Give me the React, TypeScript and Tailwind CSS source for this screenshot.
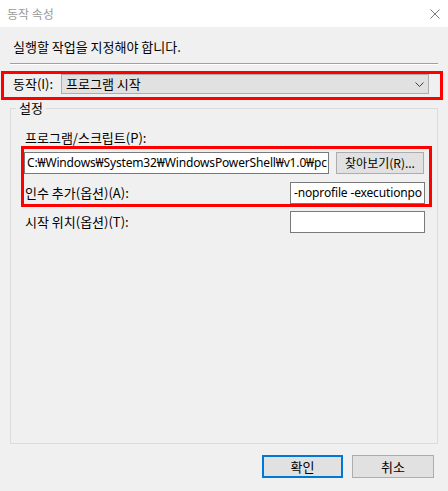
import React from "react";

const kr = "font-['Noto_Sans_CJK_KR',sans-serif]";
const latin = "font-['Noto_Sans','Noto_Sans_CJK_KR',sans-serif]";

const TextBox: React.FC<{ value?: string; className: string }> = ({ value = "", className }) => (
  <div
    className={`h-[22px] bg-white border border-[#7a7a7a] overflow-hidden whitespace-nowrap flex items-center pl-[2px] text-[12px] tracking-[-0.15px] text-black ${latin} ${className}`}
  >
    {value}
  </div>
);

export default function App() {
  return (
    <div className={`w-[448px] h-[491px] bg-[#f0f0f0] flex flex-col text-[13px] text-black ${kr}`}>
      {/* title bar */}
      <div className="h-[27px] bg-white flex items-center justify-between pl-[7px] pr-[8px] shrink-0">
        <span className="text-[12px] text-[#9a9a9a] leading-[16px]">동작 속성</span>
        <svg width="10" height="10" viewBox="0 0 10 10" className="text-[#7a7a7a]">
          <path d="M0.5 0.5 L9.5 9.5 M9.5 0.5 L0.5 9.5" stroke="currentColor" strokeWidth="1" fill="none" />
        </svg>
      </div>

      <p className="mt-[12px] ml-[13px] leading-[16px]">실행할 작업을 지정해야 합니다.</p>

      <div className="mt-[8px] mx-[10px] h-[2px] border-t border-t-[#a0a0a0] border-b border-b-white" />

      {/* action row */}
      <div className="mt-[6px] ml-[1px] w-[442px] h-[29px] border-[3px] border-[#ff0000] flex items-start pl-[9px]">
        <span className="w-[48px] shrink-0 leading-[20px] whitespace-nowrap">동작(I):</span>
        <div className="w-[368px] h-[20px] bg-[#e1e1e1] border border-[#adadad] flex items-center justify-between pl-[4px] pr-[4px]">
          <span className="leading-[16px]">프로그램 시작</span>
          <svg width="9" height="5" viewBox="0 0 9 5">
            <path d="M0.5 0.5 L4.5 4.5 L8.5 0.5" stroke="#3c3c3c" strokeWidth="1" fill="none" />
          </svg>
        </div>
      </div>

      {/* settings group */}
      <fieldset className="ml-[10px] w-[428px] h-[344px] border border-[#dcdcdc] p-0 m-0 min-w-0">
        <legend className="ml-[5px] px-[3px] leading-[16px]">설정</legend>

        <p className="mt-[14px] ml-[14px] leading-[16px]">프로그램/스크립트(P):</p>

        <div className="mt-0 ml-[10px] w-[411px] h-[61px] border-[3px] border-[#ff0000] flex flex-col pr-[4px]">
          <div className="mt-[3px] flex items-center">
            <TextBox value="C:₩Windows₩System32₩WindowsPowerShell₩v1.0₩pc" className="w-[305px]" />
            <button className="ml-[7px] w-[88px] h-[22px] bg-[#e1e1e1] border border-[#adadad] leading-[16px] text-[12px] whitespace-nowrap px-0">
              찾아보기(R)...
            </button>
          </div>
          <div className="mt-[8px] flex items-center justify-between">
            <span className="ml-[1px] leading-[16px]">인수 추가(옵션)(A):</span>
            <TextBox value="-noprofile -executionpo" className="w-[135px] pl-[3px]" />
          </div>
        </div>

        <div className="mt-[4px] ml-[14px] w-[400px] flex items-center justify-between">
          <span className="leading-[16px]">시작 위치(옵션)(T):</span>
          <TextBox className="w-[135px]" />
        </div>
      </fieldset>

      {/* dialog buttons */}
      <div className="mt-[11px] flex justify-end gap-[9px] pr-[14px]">
        <button className="w-[81px] h-[23px] bg-[#e1e1e1] border-2 border-[#0078d7] leading-[16px]">확인</button>
        <button className="w-[82px] h-[23px] bg-[#e1e1e1] border border-[#adadad] leading-[16px]">취소</button>
      </div>
    </div>
  );
}
